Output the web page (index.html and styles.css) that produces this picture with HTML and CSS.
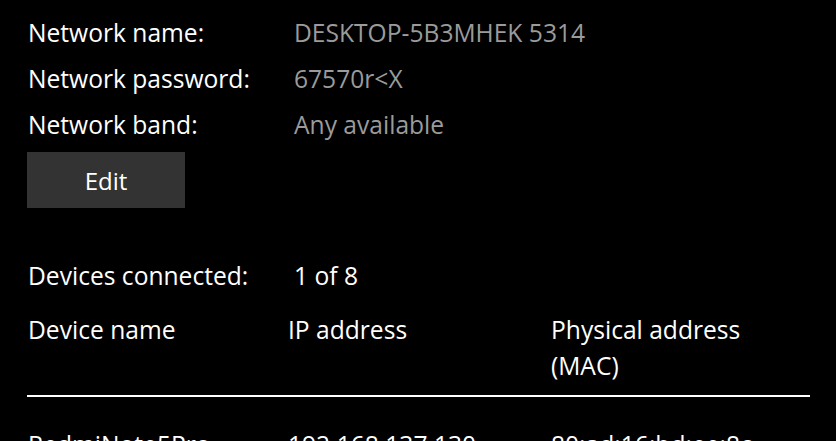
FILE: index.html
```html
<!DOCTYPE html>
<html>
	<head>
		<meta charset="UTF-8">
		<title>Mobile hotspot</title>
	<link rel="stylesheet" href="styles.css">
	</head>
	<body>
		<div class="page">
			<div class="info">
				<div class="label">Network name:</div>
				<div class="value">DESKTOP-5B3MHEK 5314</div>
				<div class="label">Network password:</div>
				<div class="value">67570r&lt;X</div>
				<div class="label">Network band:</div>
				<div class="value">Any available</div>
			</div>
			<button class="edit">Edit</button>

			<div class="info count">
				<div class="label">Devices connected:</div>
				<div class="number">1 of 8</div>
			</div>

			<div class="devices">
				<div class="head">
					<div>Device name</div>
					<div>IP address</div>
					<div>Physical address (MAC)</div>
				</div>
				<div class="row">
					<div>RedmiNote5Pro</div>
					<div>192.168.137.130</div>
					<div>80:ad:16:bd:ee:8c</div>
				</div>
			</div>
		</div>
	</body>
</html>
```
FILE: styles.css
```css
*{
	margin: 0;
	padding: 0;
}
body{
	background-color: #000;
	color: #fff;
	font-family: "Open Sans", "Noto Sans", sans-serif;
	font-size: 24.6px;
	overflow: hidden;
}
.page{
	padding: 10px 26px 0 27px;
}
.info{
	display: grid;
	grid-template-columns: 266px 1fr;
	line-height: 46px;
	padding-left: 1px;
	white-space: nowrap;
}
.value{
	color: #9b9b9b;
}
.edit{
	display: block;
	width: 158px;
	height: 56px;
	margin-top: 4px;
	background-color: #333;
	color: #fff;
	border: none;
	font-family: inherit;
	font-size: 24px;
}
.count{
	margin-top: 45px;
}
.devices{
	margin-top: 13px;
	white-space: nowrap;
}
.head, .row{
	display: grid;
	grid-template-columns: 260px 263px 1fr;
	line-height: 36px;
	padding-left: 1px;
}
.head div:last-child{
	width: 220px;
	white-space: normal;
}
.head{
	padding-bottom: 11px;
	border-bottom: 2px solid #fff;
}
.row{
	padding-top: 30px;
}
```
